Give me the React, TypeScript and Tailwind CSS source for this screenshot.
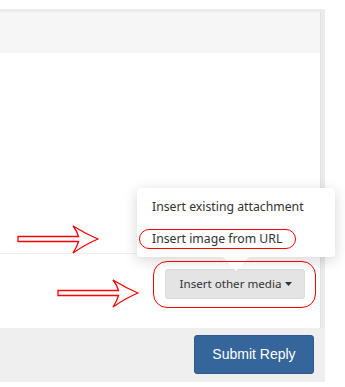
import React from "react";

function Arrow({ className }: { className: string }) {
  return (
    <svg className={className} width="82" height="29" viewBox="0 0 82 29" fill="none">
      <path
        d="M1 11.5 H61.5 Q60 6 56 1 Q69 9 81 14 Q69 19 56 28 Q60 22 61.5 16.5 H1 Z"
        fill="white"
        stroke="#ff0000"
        strokeWidth="1.3"
        strokeLinejoin="miter"
      />
    </svg>
  );
}

export default function App() {
  const ui = { fontFamily: '"Noto Sans", "Open Sans", sans-serif' };
  return (
    <div className="relative w-[345px] h-[387px] bg-white overflow-hidden">
      <div className="pt-[9px]">
        <div className="w-[325px] bg-[#ebebeb] pt-[3px]">
          <div className="w-[321px] bg-white border-r border-[#e2e2e2]">
            <div className="h-[41px] bg-[#f6f6f6]" />
            <div className="h-[201px] bg-white border-b border-[#eeeeee]" />
            <div className="h-[74px] bg-white flex justify-end items-start pt-[15px] pr-[15px]">
              <button
                className="h-[30px] w-[140px] rounded-[3px] bg-[#e4e4e4] border border-[#dcdcdc] text-[11.6px] text-[#333] flex items-center justify-center gap-[4px] pl-[2px]"
                style={ui}
              >
                <span>Insert other media</span>
                <svg width="7" height="4" viewBox="0 0 7 4">
                  <path d="M0 0 H7 L3.5 4 Z" fill="#333" />
                </svg>
              </button>
            </div>
          </div>
          <div className="h-[54px] bg-[#efefef] flex justify-end items-start pt-[7px] pr-[11px]">
            <button
              className="h-[39px] w-[120px] rounded-[3px] bg-[#34659b] border border-[#2d5a8a] text-white text-[14px]"
              style={{ fontFamily: '"Liberation Sans", Arial, sans-serif' }}
            >
              Submit Reply
            </button>
          </div>
        </div>
      </div>

      {/* dropdown popup */}
      <div
        className="absolute left-[137px] top-[188px] w-[198px] h-[69px] bg-white rounded-[4px] shadow-[0_3px_14px_rgba(0,0,0,0.17)] flex flex-col text-[12.25px] text-[#333]"
        style={ui}
      >
        <div className="h-[37px] flex items-center pl-[15px] pt-[1px]">Insert existing attachment</div>
        <div className="h-[30px] flex items-center pl-[15px] pb-[1px]">Insert image from URL</div>
        <div className="absolute left-[85px] bottom-[-14px] w-0 h-0 border-l-[14px] border-r-[14px] border-t-[15px] border-l-transparent border-r-transparent border-t-white" />
      </div>

      {/* red annotations */}
      <div className="absolute left-[139px] top-[229px] w-[157px] h-[20px] rounded-full border border-[#ff0000]" />
      <div className="absolute left-[153px] top-[261px] w-[163px] h-[47px] rounded-[14px] border border-[#ff0000]" />
      <Arrow className="absolute left-[17px] top-[225px]" />
      <Arrow className="absolute left-[57px] top-[279px]" />
    </div>
  );
}
